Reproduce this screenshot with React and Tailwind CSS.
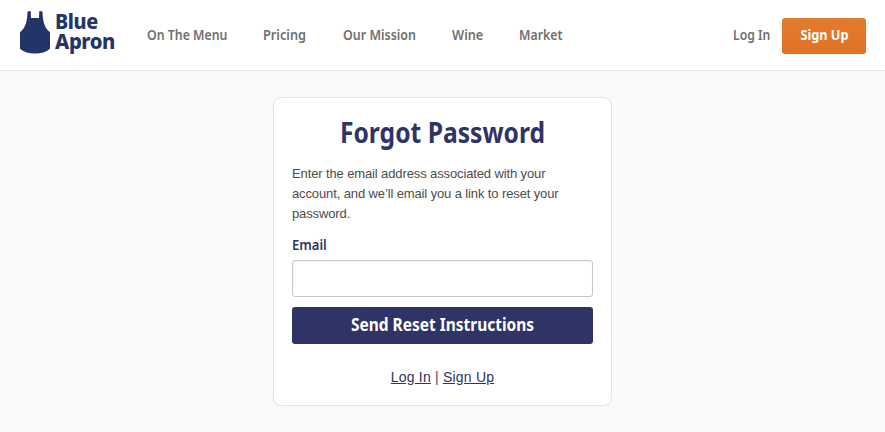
import React from 'react';

const navItems = [
  { label: 'On The Menu', className: 'w-20', textClass: 'scale-x-88' },
  { label: 'Pricing', className: 'w-11', textClass: 'scale-x-91' },
  { label: 'Our Mission', className: 'w-[73px]', textClass: 'scale-x-89' },
  { label: 'Wine', className: 'w-[31px]', textClass: 'scale-x-91' },
  { label: 'Market', className: 'w-11', textClass: 'scale-x-88' },
];

const Logo = () => (
  <a href="#" className="mt-[9px] flex w-[127px] shrink-0 items-start self-start text-[#233469]">
    <svg width="30" height="43" viewBox="0 0 30 43" fill="currentColor" className="shrink-0">
      <path d="M7.500 0.500 10.700 0l.3 7h8l.3-7 3.200.500c.2 9.500 1.800 16.300 7.500 20.700v16.500C26 41 21 42.500 15 42.500S4 41 0 37.700V21.200C5.700 16.800 7.300 10 7.500.5Z" />
    </svg>
    <span className="ml-[5px] flex flex-col items-start text-[21px] leading-[20px] font-extrabold whitespace-nowrap">
      <span className="origin-left scale-x-94 tracking-[-0.4px]">Blue</span>
      <span className="origin-left scale-x-96 tracking-[-0.4px]">Apron</span>
    </span>
  </a>
);

const Header = () => (
  <header className="flex h-[71px] items-center border-b border-[#e4e4e6] bg-white pt-0.5 pr-[19px] pl-5 font-['Noto_Sans',sans-serif]">
    <Logo />
    <nav className="flex gap-9 pb-0.5 text-sm font-semibold whitespace-nowrap text-[#707070]">
      {navItems.map((item) => (
        <a key={item.label} href="#" className={item.className}>
          <span className={`inline-block origin-left ${item.textClass}`}>{item.label}</span>
        </a>
      ))}
    </nav>
    <div className="ml-auto flex items-center gap-3 text-sm whitespace-nowrap">
      <a href="#" className="w-[37px] pb-0.5 font-semibold text-[#707070]">
        <span className="inline-block origin-left scale-x-87">Log In</span>
      </a>
      <a
        href="#"
        className="flex h-9 w-[84px] items-center justify-center rounded-[3px] bg-linear-to-b from-[#e47b30] to-[#e17224] pb-0.5 font-bold text-white"
      >
        <span className="scale-x-91">Sign Up</span>
      </a>
    </div>
  </header>
);

const App = () => {
  return (
    <div className="min-h-screen bg-[#fafafc] font-['Liberation_Sans',sans-serif]">
      <Header />
      <main className="mx-auto mt-[26px] h-[309px] w-[339px] rounded-lg border border-[#e4e4e6] bg-white px-[18px] pt-[14px]">
        <h1 className="scale-x-88 text-center font-['Noto_Sans',sans-serif] text-[28px] leading-10 font-bold whitespace-nowrap text-[#303366]">
          Forgot Password
        </h1>
        <p className="mt-3 text-[13px] leading-5 tracking-[-0.12px] whitespace-nowrap text-[#4c4c4c]">
          Enter the email address associated with your<br />
          account, and we’ll email you a link to reset your<br />
          password.
        </p>
        <form onSubmit={(e) => e.preventDefault()}>
          <label
            htmlFor="email"
            className="mt-[11px] block origin-left scale-x-93 font-['Noto_Sans',sans-serif] text-sm leading-5 font-semibold text-[#303366]"
          >
            <span className="inline-block">Email</span>
          </label>
          <input
            id="email"
            type="email"
            className="mt-[5px] block h-[37px] w-full rounded-[3px] border border-[#c8c8c8] bg-white px-2 inset-shadow-[0_1px_2px_rgba(0,0,0,0.06)] outline-none"
          />
          <button
            type="submit"
            className="mt-2.5 flex h-[37px] w-full items-center justify-center rounded-[3px] bg-[#303366] pb-[3px] font-['Noto_Sans',sans-serif] text-lg font-bold text-white"
          >
            <span className="scale-x-86">Send Reset Instructions</span>
          </button>
        </form>
        <div className="mt-[23px] text-center text-[14px] leading-5 tracking-[0.2px] text-[#4c4c4c]">
          <a href="#" className="text-[#303366] underline">Log In</a> |{' '}
          <a href="#" className="text-[#303366] underline">Sign Up</a>
        </div>
      </main>
    </div>
  );
};

export default App;
